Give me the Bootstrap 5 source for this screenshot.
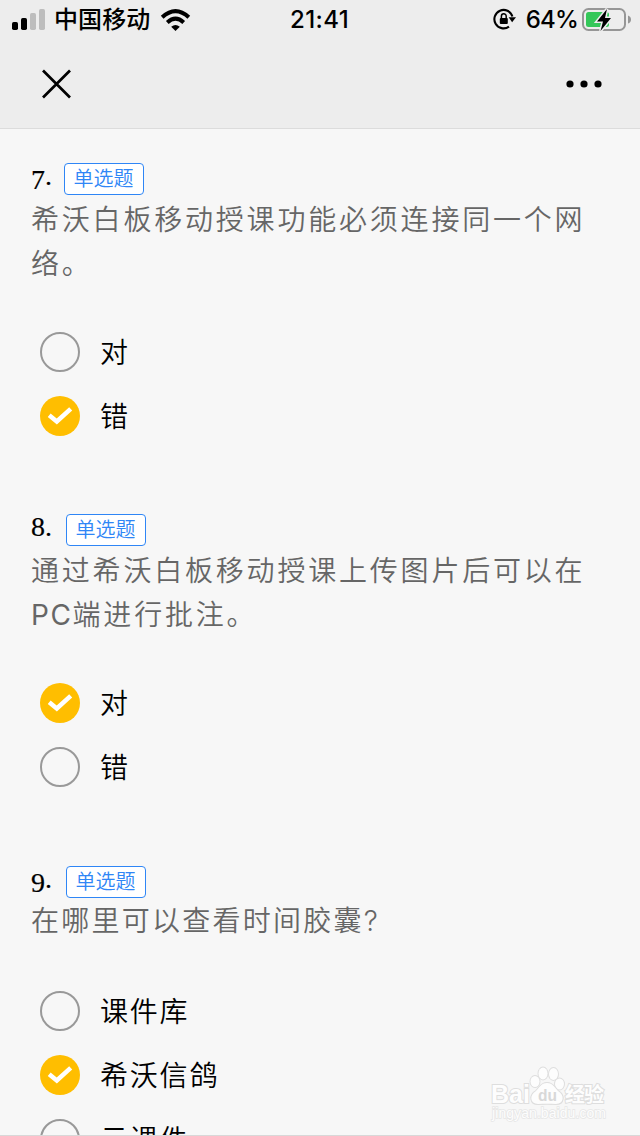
<!DOCTYPE html>
<html lang="zh-CN">
<head>
<meta charset="utf-8">
<meta name="viewport" content="width=device-width, initial-scale=1">
<title>答题</title>
<link rel="stylesheet" href="https://cdn.jsdelivr.net/npm/bootstrap@5.3.0/dist/css/bootstrap.min.css">
<style>
body{background:#f7f7f7;color:#000;font-family:Inter,"Noto Sans CJK SC",sans-serif;overflow:hidden}
.screen{width:640px;height:1136px;border-bottom:1px solid #d8d8d8}
.topbar{height:129px;background:#ededed;border-bottom:1px solid #dcdcdc}
.status{height:40px;font-size:24px;font-weight:500;line-height:40px}
.status svg,.navrow svg{display:block;flex:none}
.side{width:240px}
.signal{margin-left:12px}
.carrier{margin-left:9px;width:97px;letter-spacing:.1px}
.clock{letter-spacing:.4px;margin-left:-1px}
.percent{letter-spacing:-.8px;margin-right:4px}
.navrow{height:88px;padding:0 37px 0 41px}
.question{padding:0 31px}
.q-head{height:35px}
.num{font:400 28px/26px "Liberation Serif",serif;white-space:pre;-webkit-text-stroke:.2px #000}
.num .low{display:inline-block;transform:translateY(4px)}
.kind{width:80px;height:32px;border:1px solid #2f86f6;border-radius:4px;background:#fff;color:#2f86f6;font-size:20px;line-height:30px;font-weight:350;text-indent:-1px}
.stem{font-size:28px;line-height:44px;letter-spacing:2.8px;color:#666;font-weight:350;margin:0 -10px 34px 0}
.stem.tight{letter-spacing:2.25px;margin-top:-2px;margin-bottom:36px}
.latin{font-weight:400;letter-spacing:1.6px}
.choices{padding-left:9px}
.choice{height:64px;font-size:28px;line-height:40px;letter-spacing:1.8px;font-weight:350;gap:20px}
.choice span{padding-top:2px}
.ring{width:40px;height:40px;flex:none}
.wm{left:488px;top:1064px}
</style>
</head>
<body>
<div class="screen position-relative overflow-hidden">
  <header class="topbar">
    <div class="status d-flex justify-content-between">
      <div class="side d-flex align-items-center">
        <svg class="signal" width="33" height="40" viewBox="0 0 33 40"><rect x="0" y="22" width="6" height="8" rx="1.7"/><rect x="9" y="18" width="6" height="12" rx="1.7"/><g fill="#bdbdbd"><rect x="18" y="13" width="6" height="17" rx="1.7"/><rect x="27" y="9" width="6" height="21" rx="1.7"/></g></svg>
        <span class="carrier text-nowrap">中国移动</span>
        <svg class="ms-2" width="32" height="40" viewBox="0 0 32 40"><g transform="translate(1)"><g fill="none" stroke="#000" stroke-width="4"><path d="M2.200 17.300Q15.500 5 28.800 17.300"/><path d="M7.300 22.400Q15.500 14.900 23.700 22.400"/></g><path d="M11.200 26.700Q15.500 23.100 19.800 26.700L15.500 31Z"/></g></svg>
      </div>
      <span class="clock">21:41</span>
      <div class="side d-flex align-items-center justify-content-end">
        <svg class="me-1" width="32" height="40" viewBox="0 0 32 40"><g transform="translate(1.500)"><path d="M17.500 26.600A9.200 9.200 0 1 1 20.900 16.500" fill="none" stroke="#000" stroke-width="2.100"/><path d="M17.200 17.300H24.500L20.600 22.200Z"/><rect x="8.300" y="18" width="8" height="6" rx="1"/><path d="M9.900 18V16.200a2.400 2.400 0 0 1 4.800 0V18" fill="none" stroke="#000" stroke-width="1.500"/></g></svg>
        <span class="percent">64%</span>
        <svg width="58" height="40" viewBox="0 0 58 40"><rect x="1" y="9" width="42" height="21" rx="5.500" fill="none" stroke="#969696" stroke-width="2"/><path d="M46 15.500q3 1 3 4t-3 4z" fill="#969696"/><path d="M6.500 12H24.500a2.500 2.500 0 0 1 2.500 2.500V24.500a2.500 2.500 0 0 1-2.500 2.500H6.500a2.500 2.500 0 0 1-2.500-2.500V14.500A2.500 2.500 0 0 1 6.500 12Z" fill="#34c759"/><path d="M25 9 15 21.500h6L18.500 31 29 18h-6Z" stroke="#ededed" stroke-width="3" paint-order="stroke"/></svg>
      </div>
    </div>
    <div class="navrow d-flex align-items-center justify-content-between">
      <svg width="31" height="30" viewBox="0 0 31 30"><path d="M2 1.500 29 28.500M29 1.500 2 28.500" stroke="#000" stroke-width="2.700"/></svg>
      <svg width="38" height="10" viewBox="0 0 38 10"><circle cx="5" cy="5" r="3.600"/><circle cx="19" cy="5" r="3.600"/><circle cx="33" cy="5" r="3.600"/></svg>
    </div>
  </header>

  <svg class="d-none"><defs>
    <symbol id="off" viewBox="0 0 40 40"><circle cx="20" cy="20" r="19" fill="none" stroke="#999" stroke-width="2"/></symbol>
    <symbol id="on" viewBox="0 0 40 40"><circle cx="20" cy="20" r="20" fill="#ffbe00"/><path d="M9.200 19.200 16.800 25.500 30.700 12.800" fill="none" stroke="#fff" stroke-width="4.500"/></symbol>
  </defs></svg>

  <main>
    <section class="question" style="padding-top:34px">
      <div class="q-head d-flex"><span class="num" style="width:33px"><span class="low">7</span>.</span><span class="kind text-center">单选题</span></div>
      <p class="stem">希沃白板移动授课功能必须连接同一个网<br>络。</p>
      <div class="choices">
        <div class="choice d-flex align-items-center"><svg class="ring"><use href="#off"/></svg><span>对</span></div>
        <div class="choice d-flex align-items-center"><svg class="ring"><use href="#on"/></svg><span>错</span></div>
      </div>
    </section>
    <section class="question" style="padding-top:66px">
      <div class="q-head d-flex"><span class="num" style="width:35px">8.</span><span class="kind text-center">单选题</span></div>
      <p class="stem">通过希沃白板移动授课上传图片后可以在<br><span class="latin">PC</span>端进行批注。</p>
      <div class="choices">
        <div class="choice d-flex align-items-center"><svg class="ring"><use href="#on"/></svg><span>对</span></div>
        <div class="choice d-flex align-items-center"><svg class="ring"><use href="#off"/></svg><span>错</span></div>
      </div>
    </section>
    <section class="question" style="padding-top:67px">
      <div class="q-head d-flex"><span class="num" style="width:35px"><span class="low">9</span>.</span><span class="kind text-center">单选题</span></div>
      <p class="stem tight">在哪里可以查看时间胶囊?</p>
      <div class="choices">
        <div class="choice d-flex align-items-center"><svg class="ring"><use href="#off"/></svg><span>课件库</span></div>
        <div class="choice d-flex align-items-center"><svg class="ring"><use href="#on"/></svg><span>希沃信鸽</span></div>
        <div class="choice d-flex align-items-center"><svg class="ring"><use href="#off"/></svg><span>云课件</span></div>
      </div>
    </section>
  </main>

  <svg class="wm position-absolute" width="124" height="60" viewBox="0 0 124 60" fill="#fdfdfd" stroke="#dedede" stroke-width="2" paint-order="stroke" font-family="Liberation Sans, Noto Sans CJK SC, sans-serif">
    <text x="3" y="39" font-size="26" font-weight="700" textLength="39" lengthAdjust="spacingAndGlyphs">Bai</text>
    <ellipse cx="47" cy="17.500" rx="4.500" ry="5.500"/><ellipse cx="55" cy="9.500" rx="4.500" ry="6"/><ellipse cx="65.500" cy="10" rx="4.500" ry="6"/><ellipse cx="71.500" cy="20" rx="4.500" ry="5.500"/>
    <path d="M59 19C53 19 51 24 48 27 41 31 42 40 50 40 56 39.500 62 39.500 68 40 76 40 77 31 70 27 67 24 65 19 59 19Z"/>
    <text x="50" y="37" font-size="17" font-weight="700" fill="#d8d8d8" stroke="none" textLength="19" lengthAdjust="spacingAndGlyphs">du</text>
    <text x="77" y="38" font-size="20" font-weight="700" textLength="39">经验</text>
    <text x="4" y="54" font-size="14" stroke-width="1.500" stroke="#e6e6e6" textLength="114">jingyan.baidu.com</text>
  </svg>
</div>
<script src="https://cdn.jsdelivr.net/npm/bootstrap@5.3.0/dist/js/bootstrap.bundle.min.js"></script>
</body>
</html>
